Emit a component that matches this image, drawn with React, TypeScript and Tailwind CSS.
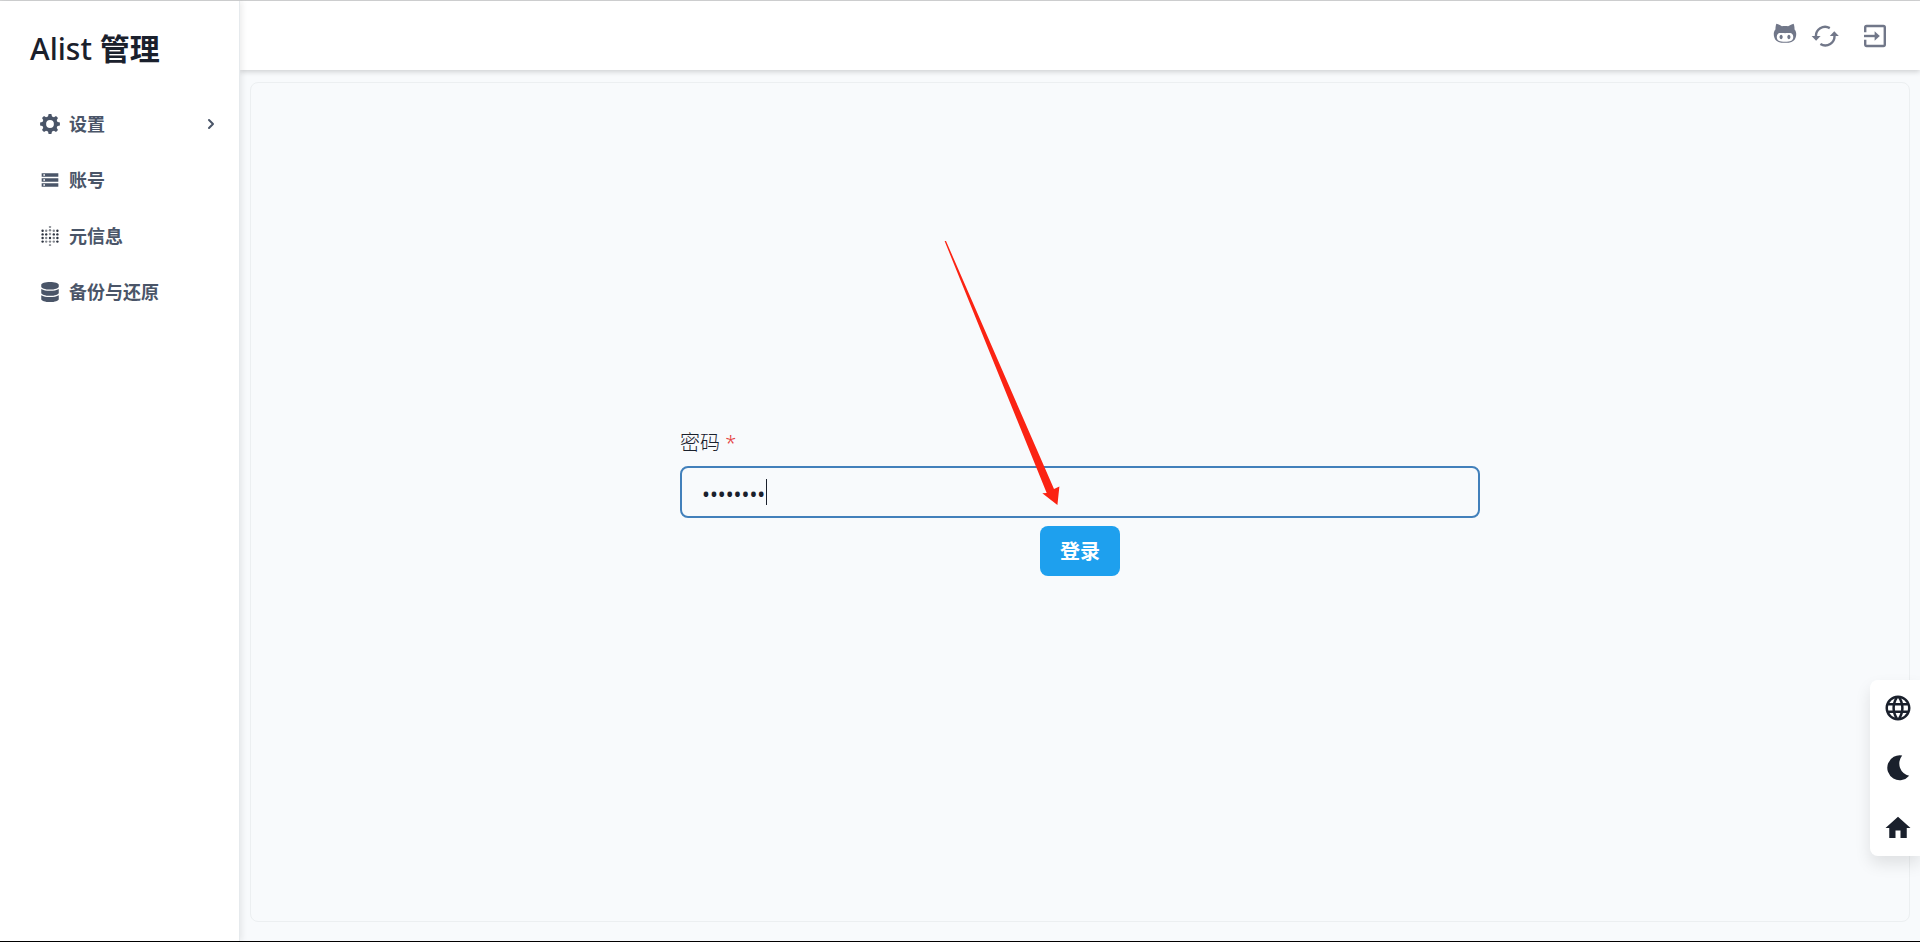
import React, { useState } from 'react';
import { DiGithubAlt } from 'react-icons/di';
import { FaDatabase } from 'react-icons/fa';
import { FiChevronRight } from 'react-icons/fi';
import { MdHome, MdLanguage, MdStorage } from 'react-icons/md';

const GearIcon: React.FC = () => (
  <svg viewBox="0 0 20 20" className="h-5 w-5" fill="none" stroke="currentColor">
    <circle cx="10" cy="10" r="5.8" strokeWidth="3.8" />
    {[0, 45, 90, 135, 180, 225, 270, 315].map((angle) => (
      <path
        key={angle}
        d="M7.8 3.4 8.6 0.1H11.4L12.2 3.4Z"
        fill="currentColor"
        stroke="none"
        transform={`rotate(${angle} 10 10)`}
      />
    ))}
  </svg>
);

const StorageIcon: React.FC = () => <MdStorage className="h-5 w-5" />;

const DatabaseIcon: React.FC = () => <FaDatabase className="h-5 w-5" />;

// [x, y, opacity]
const dots = [
  [10, 0.9, 0.5],
  [2.6, 4.8, 1], [6.2, 4.8, 0.6], [10, 4.2, 0.6], [13.8, 4.8, 0.6], [17.4, 4.8, 1],
  [2.6, 8.4, 1], [6.2, 8.4, 1], [10, 8, 0.5], [13.8, 8.4, 1], [17.4, 8.4, 1],
  [2.6, 12, 1], [6.2, 12, 0.6], [10, 12, 1], [13.8, 12, 0.6], [17.4, 12, 1],
  [2.6, 15.6, 1], [6.2, 15.6, 0.6], [10, 15.6, 0.6], [13.8, 15.6, 0.6], [17.4, 15.6, 1],
  [10, 19.1, 0.5],
];

const DotsIcon: React.FC = () => (
  <svg viewBox="0 0 20 20" className="h-5 w-5 text-[#2d3340]" fill="currentColor">
    {dots.map(([x, y, opacity]) => (
      <circle key={`${x}-${y}`} cx={x} cy={y} r="1.2" opacity={opacity} />
    ))}
  </svg>
);

const RefreshIcon: React.FC = () => (
  <svg viewBox="0 0 28 22" className="h-[22px] w-7" fill="none" stroke="currentColor" strokeWidth="2.4">
    <path d="M5 12A9.2 9.2 0 0 1 18.8 3.1" />
    <path d="M23.4 10A9.2 9.2 0 0 1 9.4 19" />
    <path d="M0.6 11H9.6L5.1 15.8Z" fill="currentColor" stroke="none" />
    <path d="M18.8 11H27.8L23.3 6.2Z" fill="currentColor" stroke="none" />
  </svg>
);

const ExitIcon: React.FC = () => (
  <svg viewBox="0 0 24 24" className="h-6 w-6" fill="none" stroke="currentColor" strokeWidth="2.4">
    <path d="M2.2 8.2V3.4Q2.2 2 3.6 2H20.4Q21.8 2 21.8 3.4V20.6Q21.8 22 20.4 22H3.6Q2.2 22 2.2 20.6V15.8" />
    <path d="M1 12H12.5" />
    <path d="M11.6 7.2 16.8 12 11.6 16.8Z" fill="currentColor" stroke="none" />
  </svg>
);

const MoonIcon: React.FC = () => (
  <svg viewBox="0 0 24 26" className="h-[26px] w-6" fill="currentColor">
    <path d="M16.2 0.6A12.4 12.4 0 1 0 23.2 20.7A12.4 12.4 0 0 1 16.2 0.6Z" />
  </svg>
);

const menu = [
  { label: '设置', icon: GearIcon, expandable: true },
  { label: '账号', icon: StorageIcon },
  { label: '元信息', icon: DotsIcon },
  { label: '备份与还原', icon: DatabaseIcon },
];

const App: React.FC = () => {
  const [password, setPassword] = useState('password');

  return (
    <div className="flex min-h-screen border-t border-b border-t-[#d2d3d4] border-b-black bg-slate-50 font-['Noto_Sans','Noto_Sans_CJK_SC',sans-serif] text-[#1a202c]">
      <aside className="relative z-10 w-60 shrink-0 border-r border-[#e6eaed] bg-white shadow-[2px_0_6px_rgba(0,0,0,0.08)]">
        <h1 className="px-[30px] pt-7 text-[30px] leading-10 font-medium">
          Alist <span className="font-bold">管理</span>
        </h1>
        <nav className="mt-[27px]">
          {menu.map((item) => (
            <a
              key={item.label}
              href="#"
              className="flex h-14 items-center gap-[9px] pr-5 pl-10 text-lg font-bold text-[#4a5568]"
            >
              <item.icon />
              {item.label}
              {item.expandable && <FiChevronRight strokeWidth={3} className="ml-auto h-4 w-4" />}
            </a>
          ))}
        </nav>
      </aside>

      <div className="flex min-w-0 flex-1 flex-col">
        <header className="flex h-[69px] items-center justify-end bg-white pr-5 text-[#717789] shadow-[0_2px_5px_rgba(0,0,0,0.16)]">
          <a href="#" aria-label="GitHub" className="flex w-[30px] justify-center pb-1.5">
            <DiGithubAlt className="h-8 w-8 shrink-0" />
          </a>
          <button type="button" aria-label="刷新" className="flex w-[50px] justify-center">
            <RefreshIcon />
          </button>
          <button type="button" aria-label="退出" className="flex w-[50px] justify-center">
            <ExitIcon />
          </button>
        </header>

        <main className="mx-2.5 mt-3 mb-[19px] flex flex-1 items-center justify-center rounded-lg border border-[#eceff1]">
          <form className="relative flex w-full max-w-[800px] flex-col gap-2" onSubmit={(e) => e.preventDefault()}>
            <label htmlFor="password" className="text-xl leading-[30px] font-light">
              密码 <span className="text-[#e53e3e]">*</span>
            </label>
            <div className="relative flex items-center">
              <input
                id="password"
                type="password"
                value={password}
                onChange={(e) => setPassword(e.target.value)}
                className="h-[52px] w-full rounded-lg border-2 border-[#4280bb] bg-transparent px-5 pt-1 text-[21px] caret-transparent outline-none"
              />
              <span className="absolute left-[86px] h-[26px] w-px bg-[#1a202c]" />
            </div>
            <button
              type="submit"
              className="h-[50px] w-20 self-center rounded-lg bg-[#1ea0ee] pt-0.5 text-xl font-bold text-white"
            >
              登录
            </button>

            {/* Pointer to the login button */}
            <svg
              viewBox="0 0 120 270"
              className="pointer-events-none absolute -top-[188px] left-[264px] h-[270px] w-[120px]"
            >
              <path d="M0.6 1H2L110 249 115.4 246.5 113.4 265 98.3 253.3 102.7 253Z" fill="#fb2313" />
            </svg>
          </form>
        </main>
      </div>

      <div className="fixed right-0 bottom-[86px] z-20 flex w-[50px] flex-col gap-3 rounded-l-lg bg-white py-1 pl-1.5 shadow-[0_8px_16px_rgba(0,0,0,0.1)]">
        <button type="button" aria-label="语言" className="flex h-12 items-center justify-center">
          <MdLanguage className="h-[30px] w-[30px]" />
        </button>
        <button type="button" aria-label="夜间模式" className="flex h-12 items-center justify-center">
          <MoonIcon />
        </button>
        <a href="#" aria-label="首页" className="flex h-12 items-center justify-center">
          <MdHome className="h-[30px] w-[30px]" />
        </a>
      </div>
    </div>
  );
};

export default App;
